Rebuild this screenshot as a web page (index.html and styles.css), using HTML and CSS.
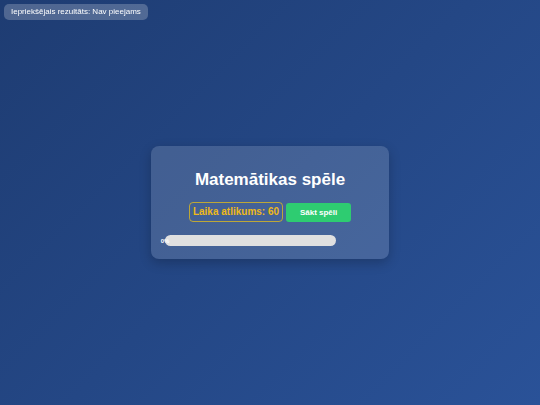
FILE: index.html
```html
<!DOCTYPE html>
<html lang="lv">
<head>
<meta charset="utf-8">
<title>Matemātikas spēle</title>
<link rel="stylesheet" href="styles.css">
</head>
<body>
<div class="last-score">Iepriekšējais rezultāts: Nav pieejams</div>
<main class="card">
  <h1 class="title">Matemātikas spēle</h1>
  <div class="controls">
    <div class="timer">Laika atlikums: 60</div>
    <button class="start">Sākt spēli</button>
  </div>
  <div class="progress">
    <div class="progress-fill" style="width:0%"><span>0%</span></div>
  </div>
</main>
</body>
</html>
```
FILE: styles.css
```css
* { box-sizing: border-box; }
html, body { height: 100%; }
body {
  margin: 0;
  font-family: "Liberation Sans", Arial, sans-serif;
  background: linear-gradient(135deg, #1e3c72 0%, #2a5298 100%);
  color: #fff;
  display: flex;
  align-items: center;
  justify-content: center;
  min-height: 100vh;
}
.last-score {
  position: fixed;
  top: 4px;
  left: 4px;
  height: 16px;
  line-height: 16px;
  padding: 0 7px;
  font-size: 8px;
  border-radius: 5px;
  background: rgba(255,255,255,0.22);
  color: #fff;
}
.card {
  width: 238px;
  padding: 24px 14px 13px;
  background: rgba(255,255,255,0.15);
  border-radius: 8px;
  box-shadow: 0 4px 12px rgba(0,0,0,0.22);
}
.title {
  margin: 0 0 12px;
  font-size: 17px;
  line-height: 20px;
  font-weight: bold;
  text-align: center;
}
.controls {
  display: flex;
  justify-content: center;
  align-items: center;
  gap: 3px;
}
.timer {
  border: 1px solid rgba(241,196,15,0.7);
  border-radius: 4px;
  padding: 3px 3px;
  font-size: 10px;
  line-height: 12px;
  font-weight: bold;
  color: #eeb919;
}
.start {
  margin-top: 1px;
  height: 19px;
  width: 65px;
  padding: 0;
  border: none;
  border-radius: 3px;
  background: #2ecc71;
  color: #fff;
  font-family: inherit;
  font-size: 8px;
  font-weight: bold;
}
.progress {
  margin-top: 13px;
  width: 171px;
  height: 11px;
  border-radius: 6px;
  background: #e0e0e0;
}
.progress-fill {
  height: 100%;
  display: flex;
  justify-content: center;
  align-items: center;
  border-radius: 6px;
  background: #2ecc71;
  font-size: 6px;
  font-weight: bold;
  color: #fff;
  white-space: nowrap;
}
```
